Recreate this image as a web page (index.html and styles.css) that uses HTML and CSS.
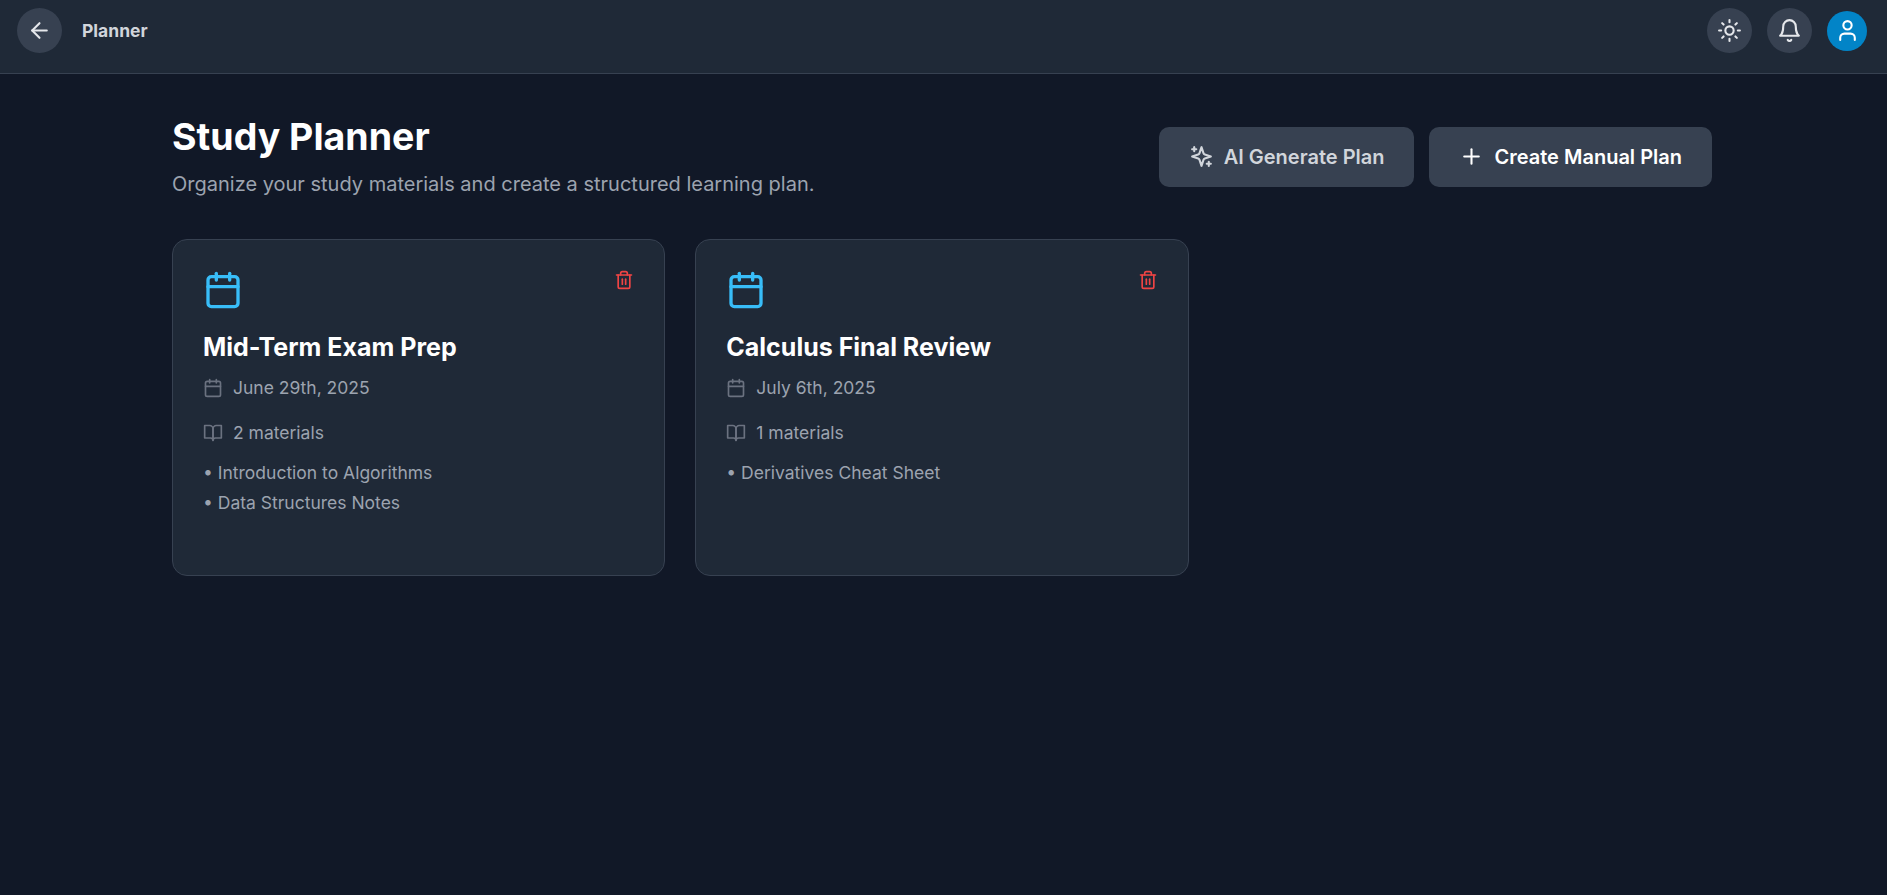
FILE: index.html
```html
<!DOCTYPE html>
<html lang="en">
<head>
<meta charset="utf-8">
<title>Planner</title>
<link rel="stylesheet" href="styles.css">
</head>
<body>
<header class="topbar">
  <div class="topbar-left">
    <button class="round-btn" aria-label="Back">
      <svg class="icon-25" viewBox="0 0 24 24"><path d="m12 19-7-7 7-7"/><path d="M19 12H5"/></svg>
    </button>
    <span class="topbar-title">Planner</span>
  </div>
  <div class="topbar-right">
    <button class="round-btn" aria-label="Theme">
      <svg class="icon-25" viewBox="0 0 24 24"><circle cx="12" cy="12" r="4"/><path d="M12 2v2"/><path d="M12 20v2"/><path d="m4.93 4.93 1.41 1.41"/><path d="m17.66 17.66 1.41 1.41"/><path d="M2 12h2"/><path d="M20 12h2"/><path d="m6.34 17.66-1.41 1.41"/><path d="m19.07 4.93-1.41 1.41"/></svg>
    </button>
    <button class="round-btn" aria-label="Notifications">
      <svg class="icon-25" viewBox="0 0 24 24"><path d="M6 8a6 6 0 0 1 12 0c0 7 3 9 3 9H3s3-2 3-9"/><path d="M10.3 21a1.94 1.94 0 0 0 3.4 0"/></svg>
    </button>
    <button class="avatar" aria-label="Profile">
      <svg class="icon-25" viewBox="0 0 24 24"><path d="M19 21v-2a4 4 0 0 0-4-4H9a4 4 0 0 0-4 4v2"/><circle cx="12" cy="7" r="4"/></svg>
    </button>
  </div>
</header>
<main class="page">
  <section class="page-head">
    <div>
      <h1 class="page-title">Study Planner</h1>
      <p class="page-sub">Organize your study materials and create a structured learning plan.</p>
    </div>
    <div class="actions">
      <button class="action action-muted">
        <svg class="icon-25" viewBox="0 0 24 24"><path d="m12 3-1.9 5.8a2 2 0 0 1-1.3 1.3L3 12l5.8 1.9a2 2 0 0 1 1.3 1.3L12 21l1.9-5.8a2 2 0 0 1 1.3-1.3L21 12l-5.8-1.9a2 2 0 0 1-1.3-1.3Z"/><path d="M5 3v4"/><path d="M3 5h4"/><path d="M19 17v4"/><path d="M17 19h4"/></svg>
        AI Generate Plan
      </button>
      <button class="action">
        <svg class="icon-25" viewBox="0 0 24 24"><path d="M5 12h14"/><path d="M12 5v14"/></svg>
        Create Manual Plan
      </button>
    </div>
  </section>
  <section class="grid">
    <article class="card">
      <div class="card-top">
        <svg class="card-icon" viewBox="0 0 24 24"><rect x="3" y="4" width="18" height="18" rx="2"/><path d="M16 2v4"/><path d="M8 2v4"/><path d="M3 10h18"/></svg>
        <button class="trash" aria-label="Delete">
          <svg class="icon-20" viewBox="0 0 24 24"><path d="M3 6h18"/><path d="M19 6v14c0 1-1 2-2 2H7c-1 0-2-1-2-2V6"/><path d="M8 6V4c0-1 1-2 2-2h4c1 0 2 1 2 2v2"/><path d="M10 11v6"/><path d="M14 11v6"/></svg>
        </button>
      </div>
      <h2 class="card-title">Mid-Term Exam Prep</h2>
      <div class="meta meta-date">
        <svg class="icon-20" viewBox="0 0 24 24"><rect x="3" y="4" width="18" height="18" rx="2"/><path d="M16 2v4"/><path d="M8 2v4"/><path d="M3 10h18"/></svg>
        June 29th, 2025
      </div>
      <div class="meta">
        <svg class="icon-20" viewBox="0 0 24 24"><path d="M2 3h6a4 4 0 0 1 4 4v14a3 3 0 0 0-3-3H2z"/><path d="M22 3h-6a4 4 0 0 0-4 4v14a3 3 0 0 1 3-3h7z"/></svg>
        2 materials
      </div>
      <ul class="materials">
        <li>• Introduction to Algorithms</li>
        <li>• Data Structures Notes</li>
      </ul>
    </article>
    <article class="card">
      <div class="card-top">
        <svg class="card-icon" viewBox="0 0 24 24"><rect x="3" y="4" width="18" height="18" rx="2"/><path d="M16 2v4"/><path d="M8 2v4"/><path d="M3 10h18"/></svg>
        <button class="trash" aria-label="Delete">
          <svg class="icon-20" viewBox="0 0 24 24"><path d="M3 6h18"/><path d="M19 6v14c0 1-1 2-2 2H7c-1 0-2-1-2-2V6"/><path d="M8 6V4c0-1 1-2 2-2h4c1 0 2 1 2 2v2"/><path d="M10 11v6"/><path d="M14 11v6"/></svg>
        </button>
      </div>
      <h2 class="card-title">Calculus Final Review</h2>
      <div class="meta meta-date">
        <svg class="icon-20" viewBox="0 0 24 24"><rect x="3" y="4" width="18" height="18" rx="2"/><path d="M16 2v4"/><path d="M8 2v4"/><path d="M3 10h18"/></svg>
        July 6th, 2025
      </div>
      <div class="meta">
        <svg class="icon-20" viewBox="0 0 24 24"><path d="M2 3h6a4 4 0 0 1 4 4v14a3 3 0 0 0-3-3H2z"/><path d="M22 3h-6a4 4 0 0 0-4 4v14a3 3 0 0 1 3-3h7z"/></svg>
        1 materials
      </div>
      <ul class="materials">
        <li>• Derivatives Cheat Sheet</li>
      </ul>
    </article>
  </section>
</main>
</body>
</html>
```
FILE: styles.css
```css
* { box-sizing: border-box; }
html, body { height: 100%; }
body {
  margin: 0;
  background: #111827;
  color: #fff;
  font-family: Inter, "Liberation Sans", sans-serif;
  overflow: hidden;
}
button { font: inherit; border: 0; padding: 0; cursor: pointer; }
svg { fill: none; stroke: currentColor; stroke-width: 2; stroke-linecap: round; stroke-linejoin: round; flex: none; }
.icon-25 { width: 25px; height: 25px; }
.icon-20 { width: 20px; height: 20px; }

.topbar {
  height: 74px;
  padding: 8px 20px 0 17px;
  display: flex;
  justify-content: space-between;
  align-items: flex-start;
  background: #1f2937;
  border-bottom: 1px solid #374151;
}
.topbar-left { display: flex; align-items: center; gap: 20px; height: 45px; }
.topbar-title { font-size: 17.5px; font-weight: 700; color: #d1d5db; }
.topbar-right { display: flex; align-items: center; gap: 15px; height: 45px; }
.round-btn {
  width: 45px; height: 45px;
  border-radius: 50%;
  background: #374151;
  color: #e5e7eb;
  display: flex; align-items: center; justify-content: center;
}
.avatar {
  width: 40px; height: 40px;
  border-radius: 50%;
  background: #0284c7;
  color: #fff;
  display: flex; align-items: center; justify-content: center;
}

.page { padding: 40px 175px 0 172px; }
.page-head {
  display: flex;
  justify-content: space-between;
  align-items: center;
  margin-bottom: 40px;
}
.page-title { margin: 0; font-size: 37.5px; line-height: 45px; font-weight: 700; color: #fff; }
.page-sub { margin: 10px 0 0; font-size: 20px; line-height: 30px; color: #9ca3af; }
.actions { display: flex; gap: 15px; }
.action {
  height: 60px;
  padding: 0 30px;
  display: flex; align-items: center; gap: 11px;
  border-radius: 10px;
  background: #374151;
  color: #fff;
  font-size: 20px;
  font-weight: 600;
}
.action-muted { color: #d1d5db; gap: 10px; padding-right: 29px; }

.grid {
  display: grid;
  grid-template-columns: repeat(3, 1fr);
  gap: 30px;
}
.card {
  background: #1f2937;
  border: 1px solid #374151;
  border-radius: 15px;
  padding: 30px;
  min-height: 336.5px;
}
.card-top { display: flex; justify-content: space-between; align-items: flex-start; }
.card-icon { width: 40px; height: 40px; color: #38bdf8; }
.trash { background: none; color: #ef4444; display: flex; }
.card-title { margin: 20px 0 8px; font-size: 25px; line-height: 35px; font-weight: 700; color: #fff; }
.meta {
  display: flex; align-items: center; gap: 10px;
  margin-bottom: 10px;
  font-size: 17.5px; line-height: 30px;
  color: #9ca3af;
}
.meta-date { margin-bottom: 15px; }
.meta svg { color: #6b7280; }
.materials { list-style: none; margin: 0; padding: 0; font-size: 17.5px; line-height: 30px; color: #9ca3af; }
```
